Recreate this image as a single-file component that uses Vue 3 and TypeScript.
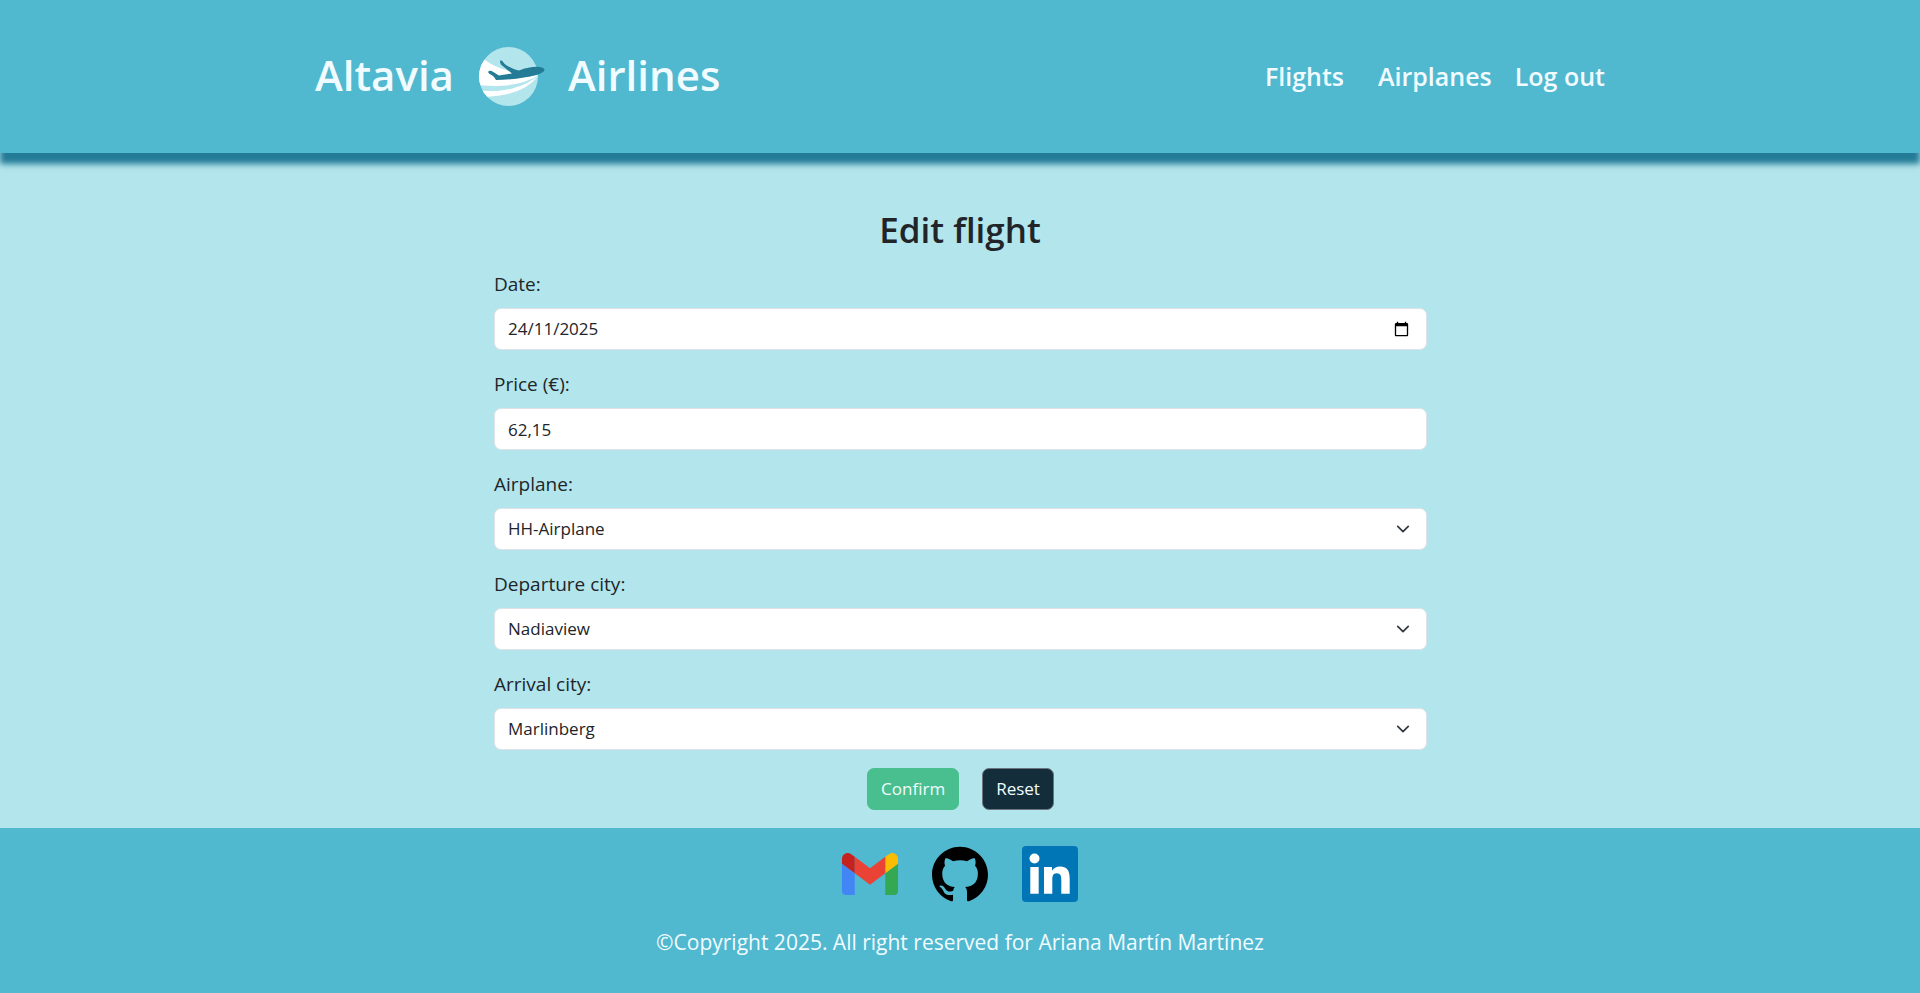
<script setup lang="ts">
import { ref } from 'vue'

interface SelectField {
  id: string
  label: string
  options: string[]
}

const date = ref('2025-11-24')
const price = ref('62,15')
const selects: SelectField[] = [
  { id: 'airplane', label: 'Airplane:', options: ['HH-Airplane'] },
  { id: 'departure', label: 'Departure city:', options: ['Nadiaview', 'Marlinberg'] },
  { id: 'arrival', label: 'Arrival city:', options: ['Marlinberg', 'Nadiaview'] },
]
const chosen = ref<Record<string, string>>({
  airplane: 'HH-Airplane',
  departure: 'Nadiaview',
  arrival: 'Marlinberg',
})

function reset() {
  date.value = '2025-11-24'
  price.value = '62,15'
  chosen.value = { airplane: 'HH-Airplane', departure: 'Nadiaview', arrival: 'Marlinberg' }
}
</script>

<template>
  <div class="page">
    <header class="header">
      <div class="bar">
        <a class="brand" href="#">
          <span>Altavia</span>
          <svg class="logo" viewBox="0 0 80 80" aria-hidden="true">
            <defs>
              <clipPath id="disc"><circle cx="37.5" cy="40.5" r="29.5" /></clipPath>
            </defs>
            <circle cx="37.5" cy="40.5" r="29.5" fill="#b3e5ec" />
            <g clip-path="url(#disc)" fill="#fff">
              <path d="M6 20 L14 24 C21 29 28 32 38 35 L67 39.500 C53 48 34 52 6 49 Z" />
              <path d="M6 54 C34 58 54 50 67 40 C56 54 38 61 6 61 Z" />
            </g>
            <path fill="#237b96" d="M17 36 C18 34.500 20 34.500 21.500 35.500 L28 39.500 L41 37.500 L30.500 29 C29 27.500 28.500 24.500 30 24.300 C32 25 32.500 27.500 35 29 C39 31.500 43 33.500 48 34.500 C57 31 66 30 71 31.500 C73.500 32.300 74.500 34 72 36 C68 39 60 40.500 53 41.500 C44 43 34 44 25 44 L23 41 C21 38.500 18 38.500 17 36 Z" />
          </svg>
          <span>Airlines</span>
        </a>
        <nav class="nav">
          <a class="wide" href="#">Flights</a>
          <a href="#">Airplanes</a>
          <a href="#">Log out</a>
        </nav>
      </div>
    </header>

    <main class="main">
      <h1>Edit flight</h1>
      <form class="form" @submit.prevent @reset.prevent="reset">
        <div class="field">
          <label for="date">Date:</label>
          <input id="date" v-model="date" class="control" type="date" />
        </div>
        <div class="field">
          <label for="price">Price (€):</label>
          <input id="price" v-model="price" class="control" type="text" inputmode="decimal" />
        </div>
        <div v-for="field in selects" :key="field.id" class="field">
          <label :for="field.id">{{ field.label }}</label>
          <div class="select">
            <select :id="field.id" v-model="chosen[field.id]" class="control">
              <option v-for="option in field.options" :key="option">{{ option }}</option>
            </select>
            <svg class="chevron" viewBox="0 0 16 16" aria-hidden="true">
              <path d="m2 5 6 6 6-6" fill="none" stroke="#343a40" stroke-width="2" stroke-linecap="round" stroke-linejoin="round" />
            </svg>
          </div>
        </div>
        <div class="actions">
          <button class="confirm" type="submit">Confirm</button>
          <button class="reset" type="reset">Reset</button>
        </div>
      </form>
    </main>

    <footer class="footer">
      <div class="social">
        <a href="#" aria-label="Gmail">
          <svg viewBox="52 17 88 88">
            <path fill="#4285f4" d="M58 94h14V60L52 45v43c0 3.320 2.690 6 6 6" />
            <path fill="#34a853" d="M120 94h14c3.320 0 6-2.690 6-6V45l-20 15" />
            <path fill="#fbbc04" d="M120 34v26l20-15v-8c0-7.420-8.470-11.650-14.400-7.200" />
            <path fill="#ea4335" d="M72 60V34l24 18 24-18v26L96 78" />
            <path fill="#c5221f" d="M52 37v8l20 15V34l-5.600-4.200c-5.940-4.450-14.400-.22-14.400 7.200" />
          </svg>
        </a>
        <a href="#" aria-label="GitHub">
          <svg viewBox="0 0 16 16">
            <path d="M8 .2C3.580.2 0 3.780 0 8.200c0 3.540 2.290 6.530 5.470 7.590.4.070.55-.17.55-.38 0-.19-.01-.82-.01-1.490-2.010.37-2.530-.49-2.690-.94-.09-.23-.48-.94-.82-1.130-.28-.15-.68-.52-.01-.53.63-.01 1.080.58 1.230.82.72 1.210 1.870.87 2.330.66.070-.52.28-.87.51-1.070-1.780-.2-3.640-.89-3.640-3.950 0-.87.31-1.590.82-2.150-.08-.2-.36-1.020.08-2.120 0 0 .67-.21 2.200.82.64-.18 1.320-.27 2-.27s1.360.09 2 .27c1.530-1.040 2.200-.82 2.200-.82.44 1.100.16 1.920.08 2.120.51.56.82 1.270.82 2.150 0 3.070-1.870 3.750-3.650 3.950.29.25.54.73.54 1.480 0 1.070-.01 1.930-.01 2.200 0 .21.15.46.55.38A8.010 8.010 0 0 0 16 8.200c0-4.420-3.580-8-8-8" />
          </svg>
        </a>
        <a href="#" aria-label="LinkedIn">
          <svg viewBox="0 0 56 56">
            <rect width="56" height="56" rx="4" fill="#0076b7" />
            <g fill="#fff">
              <circle cx="12.500" cy="12.500" r="5" />
              <path d="M8.300 21h8.400v26.700H8.300z M22 21h8v3.700c1.500-2.600 4.300-4.300 8-4.300 8 0 9.700 5.300 9.700 12.300v15h-8.400V34.400c0-3.200 0-7.200-4.400-7.200s-4.600 3.400-4.600 7v13.500H22z" />
            </g>
          </svg>
        </a>
      </div>
      <p>©Copyright 2025. All right reserved for Ariana Martín Martínez</p>
    </footer>
  </div>
</template>

<style>
body {
  margin: 0;
}
</style>

<style scoped>
.page {
  display: flex;
  flex-direction: column;
  min-height: 100vh;
  background: #b3e5ec;
  color: #212529;
  font-family: "Segoe UI", "Open Sans", "Noto Sans", sans-serif;
  font-size: 17px;
  line-height: 26px;
}

a {
  color: inherit;
  text-decoration: none;
}

.header {
  padding: 36px 24px 37px;
  background: #50b8cf;
  box-shadow: 0 11px 6px #237b96;
  color: #f0fcff;
  font-weight: 600;
}

.bar {
  display: flex;
  align-items: center;
  justify-content: space-between;
  max-width: 1290px;
  margin: 0 auto;
}

.brand {
  display: flex;
  align-items: center;
  gap: 17px;
  font-size: 42px;
  line-height: 60px;
}

.brand span {
  padding-bottom: 3px;
}

.logo {
  width: 80px;
  height: 80px;
}

.nav {
  display: flex;
  gap: 23px;
  font-size: 25px;
  line-height: 40px;
}

.wide {
  margin-right: 11px;
}

.main {
  display: flex;
  flex-direction: column;
  align-items: center;
  padding: 56px 0 18px;
}

h1 {
  margin: 0 0 17px;
  font-size: 35px;
  font-weight: 600;
  line-height: 42px;
}

.form {
  width: 50%;
  box-sizing: border-box;
  padding: 0 13px 0 14px;
}

.field {
  display: flex;
  flex-direction: column;
  gap: 7px;
  margin-bottom: 18px;
}

label {
  font-size: 19px;
  line-height: 33px;
}

.control {
  display: block;
  box-sizing: border-box;
  width: 100%;
  height: 42px;
  padding: 7px 14px 7px 13px;
  border: 1px solid #dee2e6;
  border-radius: 7px;
  background: #fff;
  color: #212529;
  font: inherit;
  appearance: none;
}

.control::-webkit-datetime-edit {
  padding: 0;
}

/* Shows the date parts as day / month / year in every locale. */
.control::-webkit-datetime-edit-fields-wrapper {
  display: inline-grid;
  padding: 0;
}

.control::-webkit-datetime-edit-text {
  grid-row: 1;
}

.control::-webkit-datetime-edit-day-field {
  grid-area: 1 / 1;
  padding: 0;
}

.control::-webkit-datetime-edit-month-field {
  grid-area: 1 / 3;
  padding: 0;
}

.control::-webkit-datetime-edit-year-field {
  grid-area: 1 / 5;
  padding: 0;
}

.select {
  position: relative;
}

.chevron {
  position: absolute;
  top: 14px;
  right: 17px;
  width: 14px;
  height: 14px;
  pointer-events: none;
}

.actions {
  display: flex;
  justify-content: center;
  gap: 23px;
}

button {
  padding: 7px 13px;
  border: 1px solid #49bf8f;
  border-radius: 7px;
  background: #49bf8f;
  color: #f0fcff;
  font: inherit;
}

.reset {
  border-color: #6c757d;
  background: #132e3a;
}

.footer {
  display: flex;
  flex: 1;
  flex-direction: column;
  align-items: center;
  padding: 18px 24px;
  background: #50b8cf;
  color: #f0fcff;
}

.social {
  display: flex;
  gap: 34px;
}

.social a,
.social svg {
  display: block;
  width: 56px;
  height: 56px;
}

.footer p {
  margin: 24px 0 0;
  font-size: 21px;
  line-height: 33px;
}
</style>
